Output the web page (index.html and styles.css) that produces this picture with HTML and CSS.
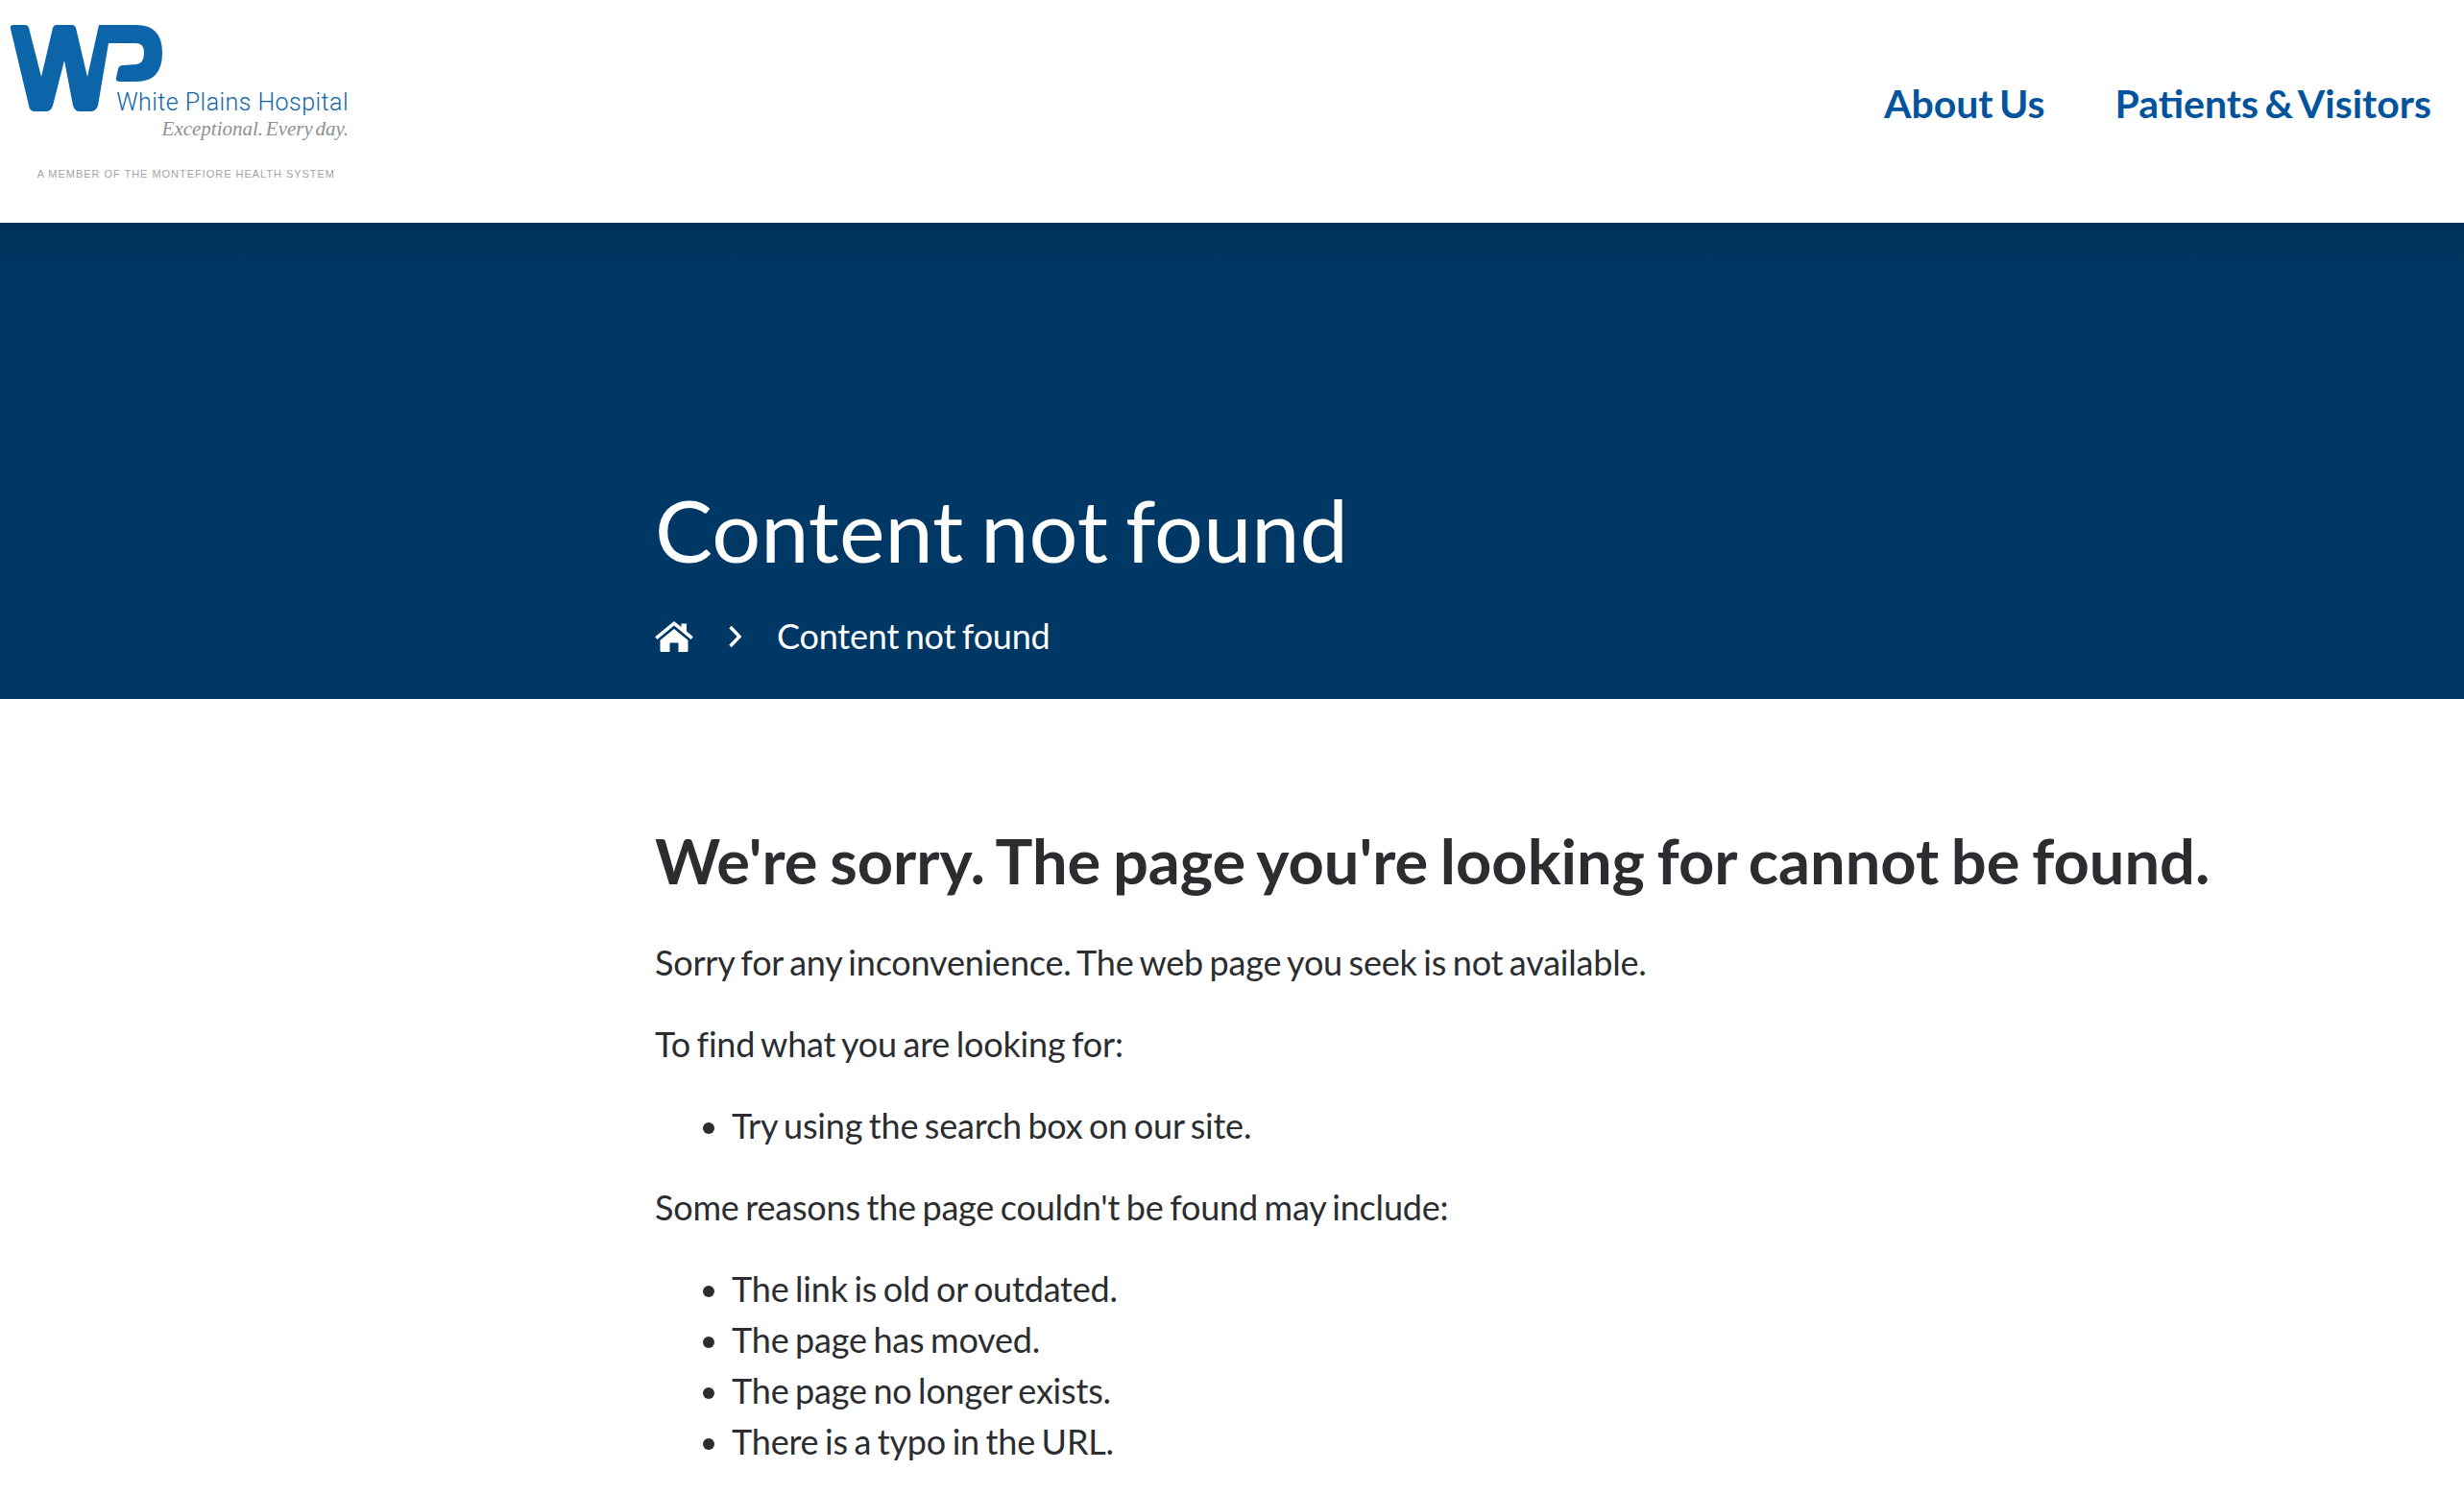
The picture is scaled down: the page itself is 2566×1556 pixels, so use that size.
FILE: index.html
```html
<!DOCTYPE html>
<html lang="en">
<head>
    <meta charset="UTF-8">
    <title>Content not found</title>
    <link rel="stylesheet" href="styles.css">
</head>
<body>

    <header class="site-header">
        <a class="logo" href="#">
            <svg class="logo-mark" viewBox="0 0 180 120" width="180" height="120">
                <path d="M11 30Q10 26 14 26L26 26Q29 26 30 29L43 80L55 29Q56 26 59 26L75 26Q78 26 79 29L91 80L103 26L142 26Q169 26 169 55Q169 85 142 85L125 85Q120 85 121 81L123 72Q124 68 128 68L142 67Q150 66 150 55Q150 45 142 45L113 45L102 110Q100 116 94 116L83 116Q78 116 76 110L67 63L55 110Q53 116 48 116L36 116Q31 116 30 110Z"/>
            </svg>
            <span class="logo-name">White Plains Hospital</span>
            <span class="logo-tag">Exceptional. Every day.</span>
            <span class="logo-member">A MEMBER OF THE MONTEFIORE HEALTH SYSTEM</span>
        </a>
        <nav class="main-nav">
            <a href="#">About Us</a>
            <a href="#">Patients &amp; Visitors</a>
        </nav>
    </header>

    <section class="hero">
        <div class="wrap">
            <h1>Content not found</h1>
            <div class="breadcrumb">
                <svg class="home-icon" viewBox="0 0 40 32" width="40" height="32">
                    <path d="M20 0L27.500 6V2.500H33V10.500L39.800 16.200L37.600 19L20 4.600L2.400 19L.2 16.200Z"/>
                    <path d="M20 8L34.500 19.800V30.500Q34.500 32 33 32H24.500V22.500H15.500V32H7Q5.500 32 5.500 30.500V19.800Z"/>
                </svg>
                <svg class="crumb-sep" viewBox="0 0 15 24" width="15" height="24">
                    <path d="M2.500 2L12 12L2.500 22" />
                </svg>
                <span>Content not found</span>
            </div>
        </div>
    </section>

    <main class="wrap content">
        <h2>We're sorry. The page you're looking for cannot be found.</h2>
        <p>Sorry for any inconvenience. The web page you seek is not available.</p>
        <p>To find what you are looking for:</p>
        <ul>
            <li>Try using the search box on our site.</li>
        </ul>
        <p>Some reasons the page couldn't be found may include:</p>
        <ul>
            <li>The link is old or outdated.</li>
            <li>The page has moved.</li>
            <li>The page no longer exists.</li>
            <li>There is a typo in the URL.</li>
        </ul>
    </main>

</body>
</html>
```

FILE: styles.css
```css
html, body {
    height: 1556px;
    overflow: hidden;
}

body {
    margin: 0;
    background-color: #fff;
    color: #2b2d30;
    font-family: "Lato", sans-serif;
    font-size: 36px;
    line-height: 53px;
    letter-spacing: -0.2px;
    word-spacing: -2.400px; /* the reference Lato has narrower spaces */
}

a {
    text-decoration: none;
}

.site-header {
    display: flex;
    justify-content: space-between;
    align-items: flex-start;
    height: 232px;
    padding-right: 34px;
}

/* Logo */
.logo {
    display: grid;
    justify-items: end;
    width: 363px;
    padding-top: 26px;
    position: relative;
    letter-spacing: 0;
    word-spacing: normal;
}

.logo-mark {
    position: absolute;
    top: 0;
    left: 0;
    fill: #0b65a8;
}

.logo-name {
    margin-top: 66px;
    color: #0f66a8;
    font-family: "Roboto", sans-serif;
    font-size: 25px;
    font-weight: 300;
    line-height: 30px;
    letter-spacing: 0.45px;
}

.logo-tag {
    color: #8e9194;
    font-family: "Liberation Serif", serif;
    font-style: italic;
    font-size: 21px;
    line-height: 24px;
    word-spacing: -2.500px;
}

.logo-member {
    margin-top: 28px;
    margin-right: 14px;
    color: #a2a4a7;
    font-family: "Liberation Sans", sans-serif;
    font-size: 11px;
    line-height: 14px;
    letter-spacing: 0.97px;
}

/* Top nav */
.main-nav {
    display: flex;
    gap: 73px;
    padding-top: 80px;
    letter-spacing: 0;
    word-spacing: -3.700px;
}

.main-nav a {
    color: #03549c;
    font-size: 41px;
    font-weight: 700;
    line-height: 56px;
}

.wrap {
    margin-left: 682px;
}

/* Blue band */
.hero {
    height: 496px;
    background-color: #003865;
    background-image: linear-gradient(#003059, #003865 60px);
    color: #fff;
    overflow: hidden;
}

.hero h1 {
    margin: 0;
    padding-top: 264px;
    font-size: 90px;
    font-weight: 400;
    line-height: 110px;
    letter-spacing: 0;
    word-spacing: -5px;
}

.breadcrumb {
    display: flex;
    align-items: center;
    margin-top: 30px;
    font-size: 36px;
    line-height: 53px;
}

.home-icon {
    fill: #fff;
}

.crumb-sep {
    margin: 0 36px 0 36px;
    fill: none;
    stroke: #fff;
    stroke-width: 3.500;
}

/* Body copy */
.content {
    padding-top: 128px;
}

.content h2 {
    margin: 0 0 40px;
    font-size: 65px;
    font-weight: 700;
    line-height: 80px;
    letter-spacing: 0;
    word-spacing: -3.200px;
}

.content p {
    margin: 0 0 32px;
}

.content ul {
    margin: 0 0 32px;
    padding-left: 80px;
    list-style: none;
}

.content li {
    position: relative;
}

.content li::before {
    content: "";
    position: absolute;
    top: 23px;
    left: -30px;
    width: 12px;
    height: 12px;
    border-radius: 50%;
    background-color: #2b2d30;
}
```
